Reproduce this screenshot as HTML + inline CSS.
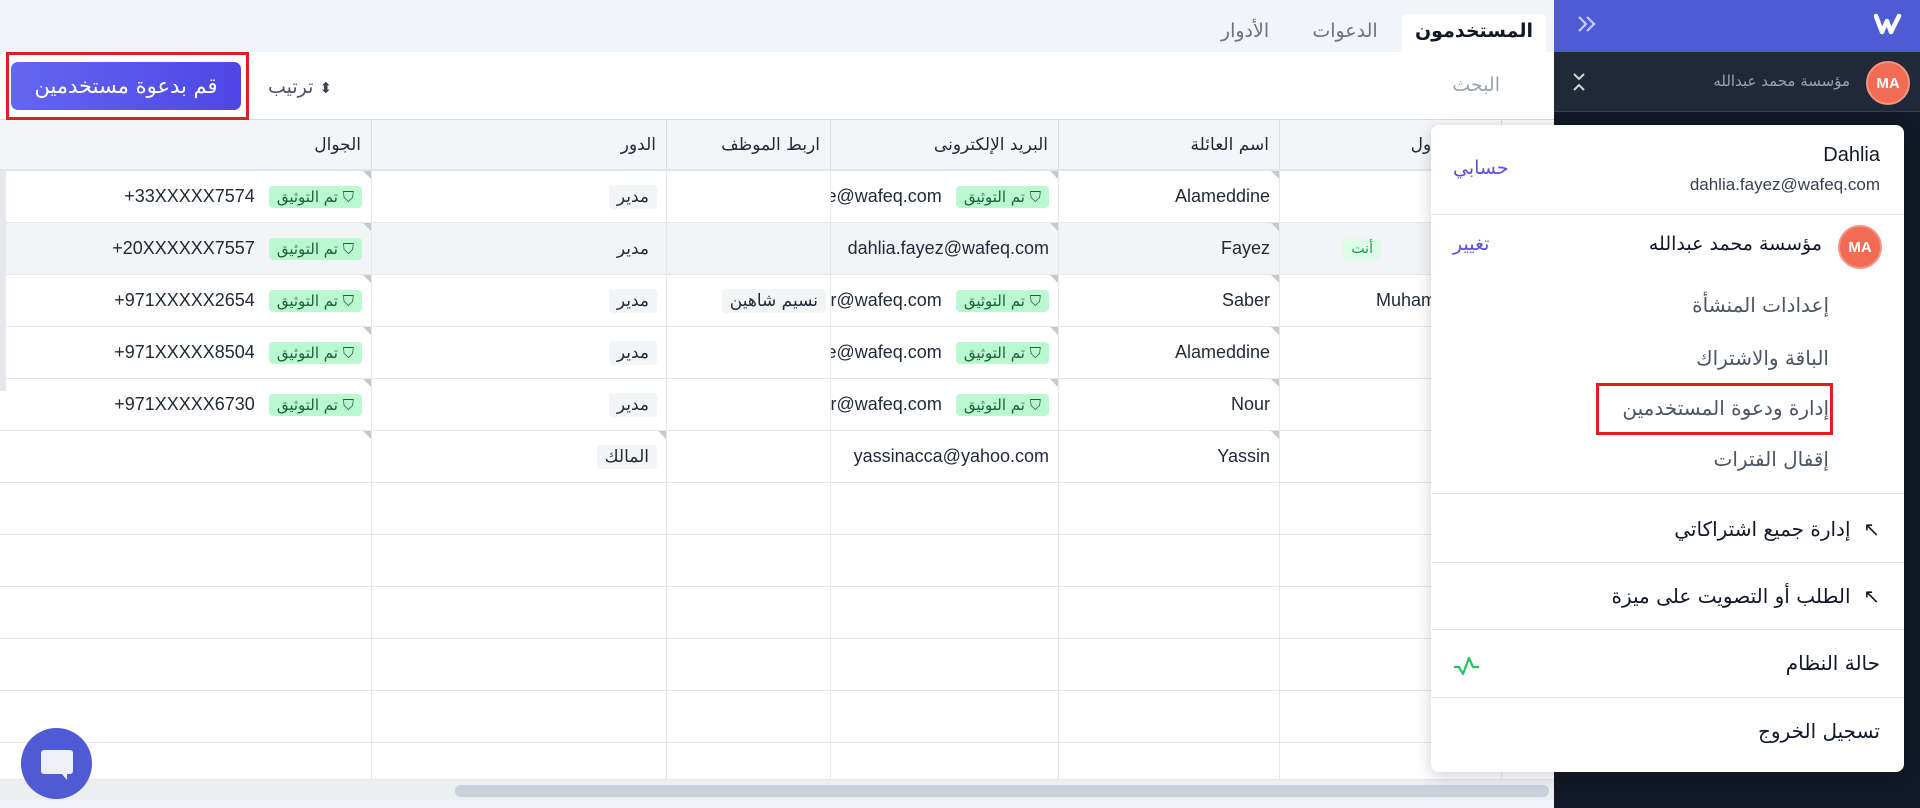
<!DOCTYPE html>
<html><head><meta charset="utf-8">
<style>
*{box-sizing:border-box;margin:0;padding:0}
body{width:1920px;height:808px;overflow:hidden;background:#f1f5f9;font-family:"Liberation Sans","DejaVu Sans",sans-serif;color:#1f2937;position:relative}
.abs{position:absolute}
.ar{font-family:"DejaVu Sans","Liberation Sans",sans-serif}
.row{position:absolute;left:0;width:1554px;height:52px;border-bottom:1px solid #e5e7eb}
.c{position:absolute;top:0;height:100%;border-right:1px solid #e5e7eb;display:flex;align-items:center;justify-content:flex-end;padding-right:9px;overflow:hidden;white-space:nowrap;font-size:18px;color:#1f2937}
.vb{background:#bbf7d0;color:#166534;font-size:15px;padding:2px 8px;border-radius:4px;margin-left:14px;display:flex;align-items:center;gap:4px;flex:none}
.rb{background:#f3f4f6;padding:2px 8px;border-radius:4px;font-size:17px}
.tri{position:absolute;top:0;right:0;width:0;height:0;border-top:8px solid #c4c9d2;border-left:8px solid transparent}
.hd{position:absolute;top:0;height:100%;border-right:1px solid #d8dde4;display:flex;align-items:center;justify-content:flex-end;padding-right:10px;font-size:17px;color:#1f2937}
.mi{position:absolute;right:75px;font-size:20px;color:#4b5563}
.sep{position:absolute;left:0;right:0;height:1px;background:#e5e7eb}
</style></head><body>
<!-- tabs -->
<div class="abs" style="left:1402px;top:14px;width:144px;height:40px;background:#fff;border-radius:6px 6px 0 0"></div>
<div class="abs ar" style="left:1402px;top:20px;width:144px;text-align:center;font-size:19px;font-weight:bold;color:#111827">المستخدمون</div>
<div class="abs ar" style="left:1300px;top:20px;width:90px;text-align:center;font-size:19px;color:#6b7280">الدعوات</div>
<div class="abs ar" style="left:1200px;top:20px;width:90px;text-align:center;font-size:19px;color:#6b7280">الأدوار</div>
<!-- toolbar -->
<div class="abs" style="left:0;top:52px;width:1554px;height:68px;background:#fff;border-bottom:1px solid #d8dde4"></div>
<div class="abs ar" style="left:1420px;top:74px;width:80px;text-align:right;font-size:19px;color:#9ca3af">البحث</div>
<div class="abs" style="left:6px;top:52px;width:243px;height:68px;border:3px solid #e11d1d"></div>
<div class="abs ar" style="left:11px;top:62px;width:230px;height:48px;border-radius:7px;background:linear-gradient(90deg,#6366f1,#4f46e5);color:#fff;font-size:21px;display:flex;align-items:center;justify-content:center">قم بدعوة مستخدمين</div>
<div class="abs ar" style="left:268px;top:76px;font-size:19px;color:#4b5563">ترتيب <span style="font-size:15px;color:#374151">⬍</span></div>
<!-- table header -->
<div class="abs" style="left:0;top:120px;width:1554px;height:51px;background:#f3f5f8;border-bottom:2px solid #e2e6ec">
<div class="hd ar" style="left:0;width:372px">الجوال</div>
<div class="hd ar" style="left:372px;width:295px">الدور</div>
<div class="hd ar" style="left:667px;width:164px">اربط الموظف</div>
<div class="hd ar" style="left:831px;width:228px">البريد الإلكترونى</div>
<div class="hd ar" style="left:1059px;width:221px">اسم العائلة</div>
<div class="hd ar" style="left:1280px;width:222px">الاسم الأول</div>
</div>
<div class="abs" style="left:0;top:171px;width:1554px;height:609px;background:#fff"></div>
<!-- rows -->
<div class="row" style="top:171px"><div class="c" style="left:0;width:372px"><span>+33XXXXX7574</span><span class="vb ar">تم التوثيق ⛉</span><i class="tri"></i></div><div class="c" style="left:372px;width:295px"><span class="rb ar">مدير</span></div><div class="c" style="left:667px;width:164px"></div><div class="c" style="left:831px;width:228px"><span>alameddine@wafeq.com</span><span class="vb ar">تم التوثيق ⛉</span><i class="tri"></i></div><div class="c" style="left:1059px;width:221px">Alameddine<i class="tri"></i></div><div class="c" style="left:1280px;width:222px">Dahlia</div></div>
<div class="row" style="top:223px;background:#f3f4f6"><div class="c" style="left:0;width:372px"><span>+20XXXXXX7557</span><span class="vb ar">تم التوثيق ⛉</span><i class="tri"></i></div><div class="c" style="left:372px;width:295px"><span class="rb ar" style="background:#f3f4f6">مدير</span></div><div class="c" style="left:667px;width:164px"></div><div class="c" style="left:831px;width:228px"><span>dahlia.fayez@wafeq.com</span><i class="tri"></i></div><div class="c" style="left:1059px;width:221px">Fayez<i class="tri"></i></div><div class="c" style="left:1280px;width:222px"><span class="ar" style="background:#dcfce7;color:#16a34a;font-size:14px;padding:2px 8px;margin-right:60px">أنت</span>Dahlia</div></div>
<div class="row" style="top:275px"><div class="c" style="left:0;width:372px"><span>+971XXXXX2654</span><span class="vb ar">تم التوثيق ⛉</span><i class="tri"></i></div><div class="c" style="left:372px;width:295px"><span class="rb ar">مدير</span></div><div class="c" style="left:667px;width:164px;padding-right:4px"><span class="rb ar">نسيم شاهين</span></div><div class="c" style="left:831px;width:228px"><span>nasim.saber@wafeq.com</span><span class="vb ar">تم التوثيق ⛉</span><i class="tri"></i></div><div class="c" style="left:1059px;width:221px">Saber<i class="tri"></i></div><div class="c" style="left:1280px;width:222px;justify-content:flex-start;padding-left:96px">Muhammad</div></div>
<div class="row" style="top:327px"><div class="c" style="left:0;width:372px"><span>+971XXXXX8504</span><span class="vb ar">تم التوثيق ⛉</span><i class="tri"></i></div><div class="c" style="left:372px;width:295px"><span class="rb ar">مدير</span></div><div class="c" style="left:667px;width:164px"></div><div class="c" style="left:831px;width:228px"><span>rami.alameddine@wafeq.com</span><span class="vb ar">تم التوثيق ⛉</span><i class="tri"></i></div><div class="c" style="left:1059px;width:221px">Alameddine<i class="tri"></i></div><div class="c" style="left:1280px;width:222px"></div></div>
<div class="row" style="top:379px"><div class="c" style="left:0;width:372px"><span>+971XXXXX6730</span><span class="vb ar">تم التوثيق ⛉</span><i class="tri"></i></div><div class="c" style="left:372px;width:295px"><span class="rb ar">مدير</span></div><div class="c" style="left:667px;width:164px"></div><div class="c" style="left:831px;width:228px"><span>nour.nour@wafeq.com</span><span class="vb ar">تم التوثيق ⛉</span><i class="tri"></i></div><div class="c" style="left:1059px;width:221px">Nour<i class="tri"></i></div><div class="c" style="left:1280px;width:222px"></div></div>
<div class="row" style="top:431px"><div class="c" style="left:0;width:372px"><i class="tri"></i></div><div class="c" style="left:372px;width:295px"><span class="rb ar">المالك</span><i class="tri"></i></div><div class="c" style="left:667px;width:164px"></div><div class="c" style="left:831px;width:228px"><span>yassinacca@yahoo.com</span></div><div class="c" style="left:1059px;width:221px">Yassin<i class="tri"></i></div><div class="c" style="left:1280px;width:222px"></div></div>
<div class="row" style="top:483px"><div class="c" style="left:0;width:372px"></div><div class="c" style="left:372px;width:295px"></div><div class="c" style="left:667px;width:164px"></div><div class="c" style="left:831px;width:228px"></div><div class="c" style="left:1059px;width:221px"></div><div class="c" style="left:1280px;width:222px"></div></div>
<div class="row" style="top:535px"><div class="c" style="left:0;width:372px"></div><div class="c" style="left:372px;width:295px"></div><div class="c" style="left:667px;width:164px"></div><div class="c" style="left:831px;width:228px"></div><div class="c" style="left:1059px;width:221px"></div><div class="c" style="left:1280px;width:222px"></div></div>
<div class="row" style="top:587px"><div class="c" style="left:0;width:372px"></div><div class="c" style="left:372px;width:295px"></div><div class="c" style="left:667px;width:164px"></div><div class="c" style="left:831px;width:228px"></div><div class="c" style="left:1059px;width:221px"></div><div class="c" style="left:1280px;width:222px"></div></div>
<div class="row" style="top:639px"><div class="c" style="left:0;width:372px"></div><div class="c" style="left:372px;width:295px"></div><div class="c" style="left:667px;width:164px"></div><div class="c" style="left:831px;width:228px"></div><div class="c" style="left:1059px;width:221px"></div><div class="c" style="left:1280px;width:222px"></div></div>
<div class="row" style="top:691px"><div class="c" style="left:0;width:372px"></div><div class="c" style="left:372px;width:295px"></div><div class="c" style="left:667px;width:164px"></div><div class="c" style="left:831px;width:228px"></div><div class="c" style="left:1059px;width:221px"></div><div class="c" style="left:1280px;width:222px"></div></div>
<div class="row" style="top:743px;height:37px"><div class="c" style="left:0;width:372px"></div><div class="c" style="left:372px;width:295px"></div><div class="c" style="left:667px;width:164px"></div><div class="c" style="left:831px;width:228px"></div><div class="c" style="left:1059px;width:221px"></div><div class="c" style="left:1280px;width:222px"></div></div>
<div class="abs" style="left:0;top:171px;width:6px;height:220px;background:#e5e7eb"></div>
<!-- scrollbar -->
<div class="abs" style="left:0;top:780px;width:1554px;height:20px;background:#eceef1"></div>
<div class="abs" style="left:455px;top:785px;width:1094px;height:12px;border-radius:6px;background:#c8d1dc"></div>
<!-- chat -->
<div class="abs" style="left:21px;top:728px;width:71px;height:71px;border-radius:50%;background:#4f5bd5"></div>
<svg class="abs" style="left:39px;top:748px" width="36" height="34" viewBox="0 0 36 34"><path d="M5 2h26a3 3 0 0 1 3 3v18a3 3 0 0 1-3 3h-3v6l-5-6H5a3 3 0 0 1-3-3V5a3 3 0 0 1 3-3z" fill="#eef0f8"/></svg>
<!-- sidebar -->
<div class="abs" style="left:1554px;top:0;width:366px;height:808px;background:#111827"></div>
<div class="abs" style="left:1554px;top:0;width:366px;height:52px;background:#4f5bd5"></div>
<svg class="abs" style="left:1577px;top:15px" width="20" height="18" viewBox="0 0 20 18"><path d="M2 2l7 7-7 7M10 2l7 7-7 7" fill="none" stroke="#c7cdfb" stroke-width="2.2"/></svg>
<svg class="abs" style="left:1874px;top:12px" width="28" height="24" viewBox="0 0 28 24"><path d="M2 4l6 16 5-11 4 11 8-16" fill="none" stroke="#fff" stroke-width="4.5" stroke-linejoin="round" stroke-linecap="round"/></svg>
<div class="abs" style="left:1554px;top:52px;width:366px;height:60px;background:#1f2937;border-bottom:1px solid #374151"></div>
<svg class="abs" style="left:1572px;top:72px" width="14" height="20" viewBox="0 0 14 20"><path d="M2 2l5 5 5-5M2 18l5-5 5 5" fill="none" stroke="#d1d5db" stroke-width="2"/></svg>
<div class="abs ar" style="left:1660px;top:72px;width:190px;text-align:right;font-size:15px;color:#9ca3af">مؤسسة محمد عبدالله</div>
<div class="abs" style="left:1866px;top:61px;width:44px;height:44px;border-radius:50%;background:#f26b55;border:2px solid #f5937f;color:#fff;font-weight:bold;font-size:15px;display:flex;align-items:center;justify-content:center">MA</div>
<!-- dropdown -->
<div class="abs" style="left:1431px;top:125px;width:473px;height:647px;background:#fff;border-radius:8px;box-shadow:0 4px 16px rgba(0,0,0,.18)">
<div class="abs" style="right:24px;top:19px;font-size:20px;color:#111827">Dahlia</div>
<div class="abs" style="right:24px;top:50px;font-size:17px;color:#374151">dahlia.fayez@wafeq.com</div>
<div class="abs ar" style="left:22px;top:32px;font-size:19px;color:#5b4fd6">حسابي</div>
<div class="sep" style="top:89px"></div>
<div class="abs" style="right:22px;top:100px;width:44px;height:44px;border-radius:50%;background:#f26b55;border:2px solid #f5937f;color:#fff;font-weight:bold;font-size:15px;display:flex;align-items:center;justify-content:center">MA</div>
<div class="abs ar" style="right:82px;top:108px;font-size:19px;color:#111827">مؤسسة محمد عبدالله</div>
<div class="abs ar" style="left:22px;top:108px;font-size:19px;color:#5b4fd6">تغيير</div>
<div class="mi ar" style="top:168px">إعدادات المنشأة</div>
<div class="mi ar" style="top:221px">الباقة والاشتراك</div>
<div class="abs" style="left:165px;top:258px;width:237px;height:52px;border:3px solid #e11d1d"></div>
<div class="mi ar" style="top:271px">إدارة ودعوة المستخدمين</div>
<div class="mi ar" style="top:322px">إقفال الفترات</div>
<div class="sep" style="top:368px"></div>
<div class="abs ar" style="right:24px;top:392px;font-size:20px;color:#111827">إدارة جميع اشتراكاتي&nbsp; ↖</div>
<div class="sep" style="top:437px"></div>
<div class="abs ar" style="right:24px;top:459px;font-size:20px;color:#111827">الطلب أو التصويت على ميزة&nbsp; ↖</div>
<div class="sep" style="top:504px"></div>
<div class="abs ar" style="right:24px;top:526px;font-size:20px;color:#111827">حالة النظام</div>
<svg class="abs" style="left:22px;top:531px" width="28" height="20" viewBox="0 0 28 20"><path d="M1 11h5l4 7 6-16 4 9h6" fill="none" stroke="#22c55e" stroke-width="2.2" stroke-linejoin="round"/></svg>
<div class="sep" style="top:572px"></div>
<div class="abs ar" style="right:24px;top:594px;font-size:20px;color:#111827">تسجيل الخروج</div>
</div>
</body></html>
